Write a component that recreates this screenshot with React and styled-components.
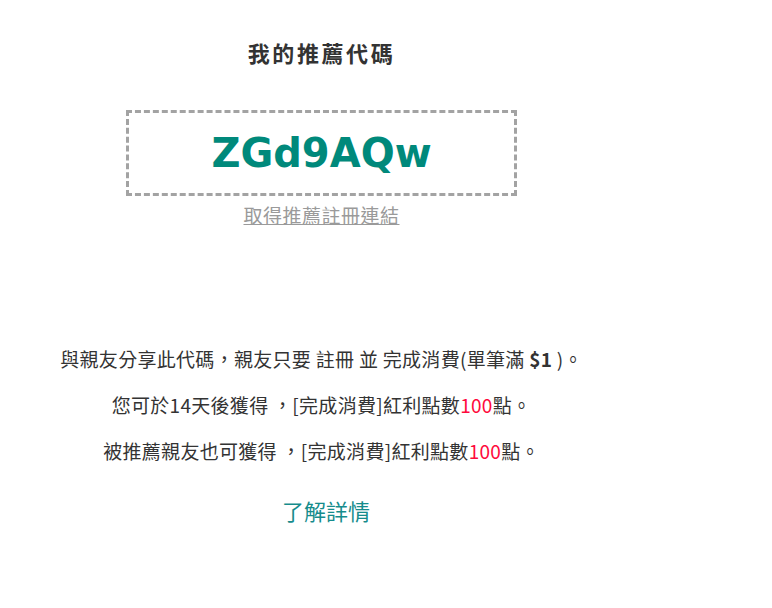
import React from "react";
import styled, { createGlobalStyle } from "styled-components";

const GlobalStyle = createGlobalStyle`
  body {
    margin: 0;
    background: #fff;
    font-family: "Noto Sans CJK TC", "Noto Sans", sans-serif;
    color: #333;
  }
`;

const Page = styled.div`
  width: 643px;
  padding-top: 36px;
  text-align: center;
`;

const Title = styled.h2`
  margin: 0;
  font-size: 22px;
  line-height: 32px;
  font-weight: 700;
  letter-spacing: 2.6px;
  color: #333;
`;

const CodeBox = styled.div`
  box-sizing: border-box;
  width: 391px;
  height: 86px;
  margin: 42px auto 0;
  border: 3px dashed #a3a3a3;
  display: flex;
  align-items: center;
  justify-content: center;
`;

const Code = styled.span`
  font-family: "DejaVu Sans", Verdana, sans-serif;
  font-weight: 700;
  font-size: 40px;
  color: #00897b;
`;

const LinkText = styled.a`
  display: inline-block;
  margin-top: 6px;
  font-size: 19px;
  line-height: 26px;
  letter-spacing: 0.5px;
  color: #9a9a9a;
  text-decoration: underline;
  cursor: pointer;
`;

const Info = styled.div`
  margin-top: 117px;
  display: flex;
  flex-direction: column;
  gap: 18px;
`;

const Line = styled.p`
  margin: 0;
  font-size: 19px;
  line-height: 28px;
  letter-spacing: 0.3px;
`;

const Red = styled.span`
  color: #ff0a3c;
`;

const More = styled.a`
  display: inline-block;
  margin-top: 30px;
  padding-left: 9px;
  font-size: 22px;
  line-height: 30px;
  color: #168c8c;
  cursor: pointer;
`;

export default function App() {
  return (
    <>
      <GlobalStyle />
      <Page>
        <Title>我的推薦代碼</Title>
        <CodeBox>
          <Code>ZGd9AQw</Code>
        </CodeBox>
        <LinkText>取得推薦註冊連結</LinkText>
        <Info>
          <Line>
            與親友分享此代碼，親友只要 註冊 並 完成消費(單筆滿 <b>$1</b> )。
          </Line>
          <Line>
            您可於14天後獲得 ，[完成消費]紅利點數<Red>100</Red>點。
          </Line>
          <Line>
            被推薦親友也可獲得 ，[完成消費]紅利點數<Red>100</Red>點。
          </Line>
        </Info>
        <More>了解詳情</More>
      </Page>
    </>
  );
}
